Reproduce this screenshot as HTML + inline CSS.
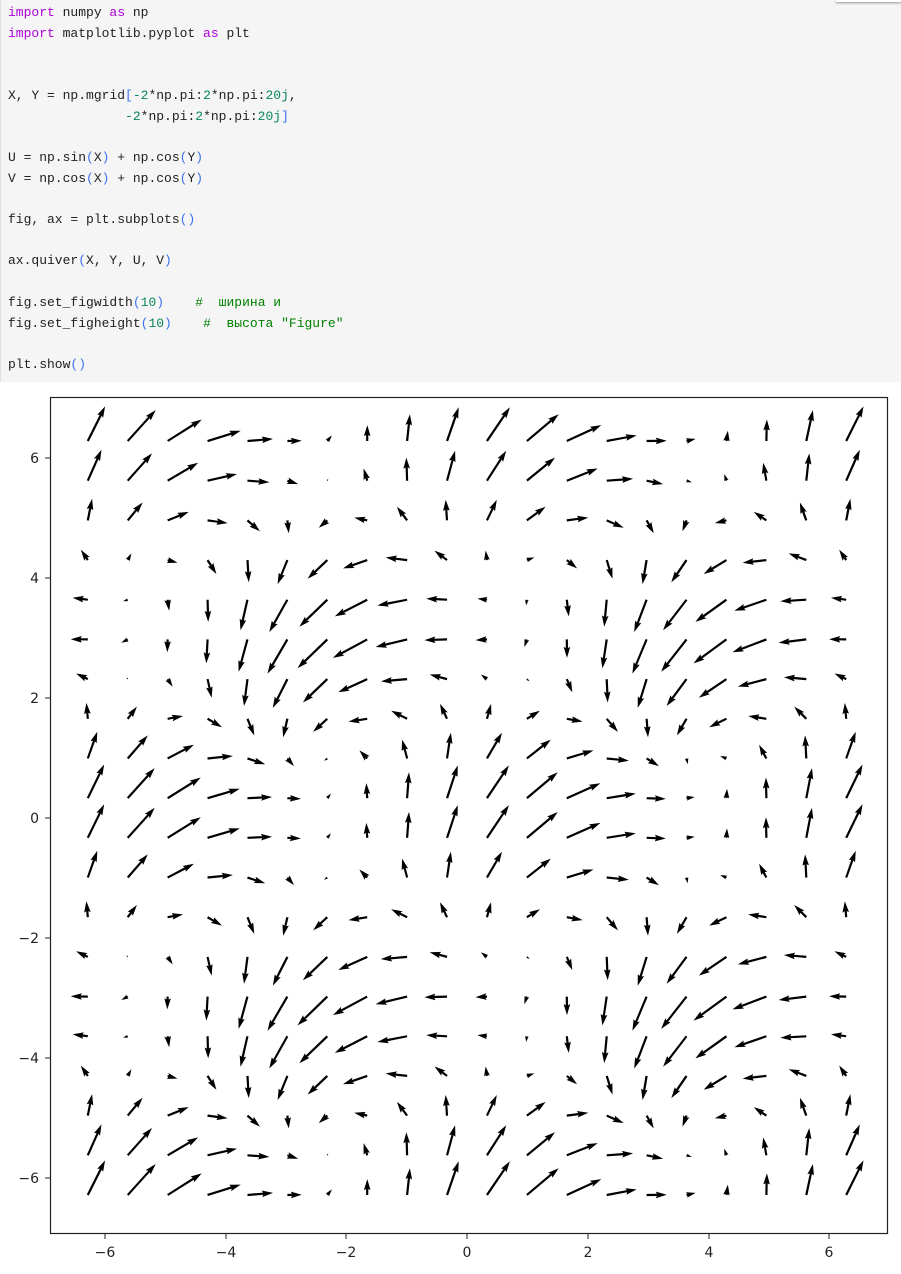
<!DOCTYPE html>
<html><head><meta charset="utf-8">
<style>
html,body{margin:0;padding:0;background:#fff;width:901px;height:1274px;overflow:hidden}
.code{position:absolute;left:0;top:0;width:900px;height:382px;background:#f5f5f5;border-left:1px solid #e0e0e0}
pre{margin:0;position:absolute;left:7px;top:3px;font-family:"Liberation Mono","DejaVu Sans Mono",monospace;font-size:13px;line-height:20.7px;color:#212121}
.k{color:#af00db}.n{color:#098658}.b{color:#3b73f0}.c{color:#008000}
.tab{position:absolute;left:836px;top:0;width:65px;height:2px;background:#fff;box-shadow:0 1px 2px #888}
svg{position:absolute;left:0;top:0}
svg text{font-family:"DejaVu Sans","Liberation Sans",sans-serif;font-size:14px;fill:#222}
</style></head><body>
<div class="code"><pre><span class="k">import</span> numpy <span class="k">as</span> np
<span class="k">import</span> matplotlib.pyplot <span class="k">as</span> plt


X, Y = np.mgrid<span class="b">[</span><span class="n">-2</span>*np.pi:<span class="n">2</span>*np.pi:<span class="n">20j</span>,
               <span class="n">-2</span>*np.pi:<span class="n">2</span>*np.pi:<span class="n">20j</span><span class="b">]</span>

U = np.sin<span class="b">(</span>X<span class="b">)</span> + np.cos<span class="b">(</span>Y<span class="b">)</span>
V = np.cos<span class="b">(</span>X<span class="b">)</span> + np.cos<span class="b">(</span>Y<span class="b">)</span>

fig, ax = plt.subplots<span class="b">()</span>

ax.quiver<span class="b">(</span>X, Y, U, V<span class="b">)</span>

fig.set_figwidth<span class="b">(</span><span class="n">10</span><span class="b">)</span>    <span class="c">#  ширина и</span>
fig.set_figheight<span class="b">(</span><span class="n">10</span><span class="b">)</span>    <span class="c">#  высота "Figure"</span>

plt.show<span class="b">()</span></pre></div>
<div class="tab"></div>
<svg id="plot" width="901" height="1274" xmlns="http://www.w3.org/2000/svg">
<rect x="50.5" y="397.5" width="837" height="836" fill="none" stroke="#222" stroke-width="1.2"/>
<g stroke="#222" stroke-width="1">
<line x1="105" y1="1234" x2="105" y2="1239"/><line x1="226" y1="1234" x2="226" y2="1239"/><line x1="346" y1="1234" x2="346" y2="1239"/><line x1="467" y1="1234" x2="467" y2="1239"/><line x1="588" y1="1234" x2="588" y2="1239"/><line x1="709" y1="1234" x2="709" y2="1239"/><line x1="829" y1="1234" x2="829" y2="1239"/>
<line x1="45" y1="458" x2="50" y2="458"/><line x1="45" y1="578" x2="50" y2="578"/><line x1="45" y1="698" x2="50" y2="698"/><line x1="45" y1="818" x2="50" y2="818"/><line x1="45" y1="938" x2="50" y2="938"/><line x1="45" y1="1058" x2="50" y2="1058"/><line x1="45" y1="1178" x2="50" y2="1178"/>
</g>
<g text-anchor="middle">
<text x="105" y="1257">−6</text><text x="226" y="1257">−4</text><text x="346" y="1257">−2</text><text x="467" y="1257">0</text><text x="588" y="1257">2</text><text x="709" y="1257">4</text><text x="829" y="1257">6</text>
</g>
<g text-anchor="end">
<text x="39" y="463">6</text><text x="39" y="583">4</text><text x="39" y="703">2</text><text x="39" y="823">0</text><text x="39" y="943">−2</text><text x="39" y="1063">−4</text><text x="39" y="1183">−6</text>
</g>
<g id="arrows" fill="#000"></g>
</svg>
<script>
(function(){
var g=document.getElementById('arrows'),s='';
var N=20,a=-2*Math.PI,st=4*Math.PI/19,sc=17.3,w0=2.2;
for(var i=0;i<N;i++)for(var j=0;j<N;j++){
 var x=a+i*st,y=a+j*st;
 var u=Math.sin(x)+Math.cos(y),v=Math.cos(x)+Math.cos(y);
 var px=467+x*60.35,py=818-y*60.0;
 var L=Math.sqrt(u*u+v*v)*sc; if(L<0.3)continue;
 var w=w0,hl=5*w,hal=4.5*w,hw=1.5*w,k=1;
 if(L<hl){k=L/hl;}
 var ww=w/2*k,HL=hl*k,HAL=hal*k,HW=hw*k;
 var pts=[[0,-ww],[L-HAL,-ww],[L-HL,-HW],[L,0],[L-HL,HW],[L-HAL,ww],[0,ww]];
 var ang=Math.atan2(-v,u),c=Math.cos(ang),sn=Math.sin(ang),p=[];
 for(var m=0;m<pts.length;m++){var X=pts[m][0],Y=pts[m][1];p.push((px+X*c-Y*sn).toFixed(1)+','+(py+X*sn+Y*c).toFixed(1));}
 s+='<polygon points="'+p.join(' ')+'"/>';
}
g.innerHTML=s;
})();
</script>
</body></html>
